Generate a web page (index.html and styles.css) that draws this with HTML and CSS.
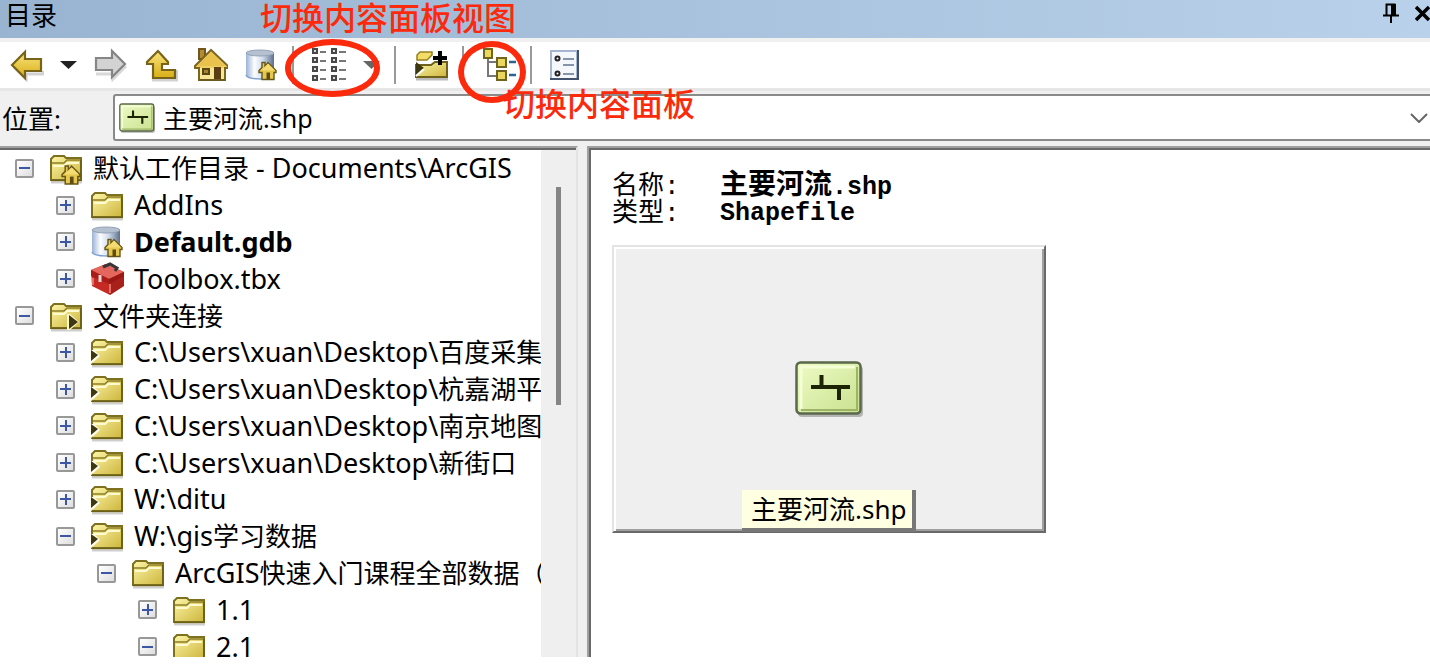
FILE: index.html
```html
<!DOCTYPE html>
<html lang="zh-CN">
<head>
    <meta charset="UTF-8">
    <meta name="viewport" content="width=device-width, initial-scale=1.0">
    <title>目录</title>
    <link rel="stylesheet" href="styles.css">
</head>
<body>

    <!-- Shared icons -->
    <svg class="icon-defs" aria-hidden="true">
        <defs>
            <linearGradient id="gold" x1="0" y1="0" x2="1" y2="1">
                <stop offset="0" stop-color="#fdf6a8"/>
                <stop offset="1" stop-color="#cdb53c"/>
            </linearGradient>
            <linearGradient id="arrowGold" x1="0" y1="0" x2="0" y2="1">
                <stop offset="0" stop-color="#f8e47c"/>
                <stop offset="1" stop-color="#d9ae16"/>
            </linearGradient>
            <linearGradient id="steel" x1="0" y1="0" x2="1" y2="0">
                <stop offset="0" stop-color="#9db2d6"/>
                <stop offset="0.3" stop-color="#fbfdff"/>
                <stop offset="0.6" stop-color="#cfdbea"/>
                <stop offset="1" stop-color="#5d6f8c"/>
            </linearGradient>
            <linearGradient id="green" x1="0" y1="0" x2="1" y2="1">
                <stop offset="0" stop-color="#eefbc4"/>
                <stop offset="1" stop-color="#c9e190"/>
            </linearGradient>
        </defs>
        <symbol id="house" viewBox="0 0 20 20">
            <path d="M4 2h3v4l3-4 8 8v2h-2v7H4v-7H1v-2l3-3z" fill="#e6c84e" stroke="#66561a" stroke-width="1.4"/>
            <path d="M10 3l-7 7h14z" fill="#f4dc72"/>
            <path d="M8.5 12h3.5v7H8.5z" fill="#5e4c14"/>
        </symbol>
        <symbol id="folder" viewBox="0 0 34 34">
            <path d="M2 31.5h31" stroke="#cfcfcf" stroke-width="2"/>
            <path d="M2 29V8l3-3h10l2 2h15v22z" fill="url(#gold)" stroke="#7d701f" stroke-width="2"/>
            <path d="M3 12h12l3-3h13" fill="none" stroke="#8d7f28" stroke-width="1.6"/>
            <path d="M4 15h11l3-3h12" fill="none" stroke="#fffbd0" stroke-width="2"/>
            <path d="M2 29.5h30V9" fill="none" stroke="#6c5f18" stroke-width="1.6"/>
        </symbol>
        <symbol id="folder-link" viewBox="0 0 34 34">
            <use href="#folder"/>
            <path d="M0 15h4l6 6-10 9z" fill="#fffdf0"/>
            <path d="M1 15l7 5-7 6z" fill="#3e3810"/>
        </symbol>
        <symbol id="folder-home" viewBox="0 0 34 34">
            <use href="#folder"/>
            <use href="#house" x="12" y="13" width="21" height="21"/>
        </symbol>
        <symbol id="folder-root" viewBox="0 0 34 34">
            <use href="#folder"/>
            <path d="M18 15h3l9 8-9 8h-3z" fill="#fff9d0"/>
            <path d="M20 16l9 7-9 7z" fill="#3e3810"/>
        </symbol>
        <symbol id="database" viewBox="0 0 34 34">
            <path d="M2 5v22c0 5 28 5 28 0V5z" fill="url(#steel)"/>
            <path d="M2 27c2 5 22 5 26 1" fill="none" stroke="#7da0d0" stroke-width="1.5"/>
            <ellipse cx="16" cy="5" rx="14" ry="3" fill="#b5c1d0" stroke="#93a1b5"/>
            <use href="#house" x="14" y="12" width="20" height="21"/>
        </symbol>
        <symbol id="toolbox" viewBox="0 0 34 34">
            <path d="M1 8L16 2l18 8v14L20 33 2 24z" fill="#c52a23"/>
            <path d="M1 8L16 2l18 8-15 7z" fill="#e4675e"/>
            <path d="M1 8l18 9v5L1 14zM34 10l-15 7v5l15-8z" fill="#a81d18"/>
            <path d="M19 17l15-7v14L20 33z" fill="#86130f" opacity="0.45"/>
            <path d="M13 5l7-3 7 4-2 3" fill="none" stroke="#363636" stroke-width="3"/>
            <path d="M10 13v7" stroke="#e9d8d6" stroke-width="3"/>
            <path d="M3 16v7M20 22v9" stroke="#f08a81" stroke-width="1.5"/>
        </symbol>
        <symbol id="shape-line" viewBox="0 0 68 56">
            <rect x="3" y="5" width="65" height="51" rx="4" fill="#b4b4b4"/>
            <rect x="1.5" y="1.5" width="64" height="51" rx="4" fill="url(#green)" stroke="#5a684b" stroke-width="2.5"/>
            <path d="M6 48V6h54" fill="none" stroke="#f4ffd6" stroke-width="3"/>
            <path d="M6 49h56V6" fill="none" stroke="#9db467" stroke-width="2"/>
            <path d="M16 26h39M26.500 14v12M44 26v13" fill="none" stroke="#1d2405" stroke-width="4"/>
        </symbol>
    </svg>

    <header class="title-bar">
        <h1>目录</h1>
        <div class="window-buttons">
            <button type="button" aria-label="自动隐藏">
                <svg width="16" height="20" viewBox="0 0 16 20"><path d="M3.500 12V1.500h8V12M0 12.500h16M8 13v7" fill="none" stroke="#000" stroke-width="2"/><path d="M8 1h5v11H8z"/></svg>
            </button>
            <button type="button" aria-label="关闭">
                <svg width="16" height="20" viewBox="0 0 16 20"><path d="M1 4l13 13M14 4L1 17" stroke="#000" stroke-width="3.500"/></svg>
            </button>
        </div>
    </header>

    <div class="toolbar" role="toolbar">
        <button type="button" aria-label="后退">
            <svg viewBox="0 0 34 34"><path d="M4 19l12 12v-5h17v-3" fill="none" stroke="#d2d2d2" stroke-width="3"/><path d="M2 17L15 4v7h16v12H15v7z" fill="url(#arrowGold)" stroke="#77631a" stroke-width="2.200"/></svg>
        </button>
        <button type="button" class="caret" aria-label="历史">
            <svg viewBox="0 0 18 34"><path d="M0 13h17l-8.500 8z" fill="#222"/></svg>
        </button>
        <button type="button" aria-label="前进">
            <svg viewBox="0 0 34 34"><path d="M32 18L19 31v-5H2" fill="none" stroke="#d8d8d8" stroke-width="3"/><path d="M31 16L18 3v7H2v12h16v7z" fill="#d3d3d3" stroke="#858585" stroke-width="2.200"/></svg>
        </button>
        <button type="button" aria-label="向上一级">
            <svg viewBox="0 0 34 34"><path d="M8 32h25V22" fill="none" stroke="#d2d2d2" stroke-width="3"/><path d="M14 3L3 14v2h6v14h22v-8H18v-6h6v-2z" fill="url(#arrowGold)" stroke="#77631a" stroke-width="2.200"/></svg>
        </button>
        <button type="button" aria-label="主目录">
            <svg viewBox="0 0 34 34"><path d="M5 1h6v10H5z" fill="#b38b35" stroke="#6f571e" stroke-width="2"/><path d="M17 2L1 18v2h4v12h26V20h3v-2z" fill="#efcf62" stroke="#7c651f" stroke-width="2"/><path d="M6 20h24v11H6z" fill="#f7e693"/><path d="M17 4L3 18h28z" fill="#e8c24d"/><path d="M9 21h6v5H9z" fill="#a98230" stroke="#5a4717" stroke-width="2"/><path d="M20 19h7v13h-7z" fill="#5c3c11"/><path d="M5 32h26" stroke="#6d5a1e" stroke-width="2"/></svg>
        </button>
        <button type="button" aria-label="默认地理数据库">
            <svg><use href="#database"/></svg>
        </button>
        <span class="separator"></span>
        <button type="button" aria-label="切换内容面板视图">
            <svg viewBox="0 0 34 34"><g fill="#ddd" stroke="#484848" stroke-width="2"><path d="M1 1h4v4H1zM1 10h4v4H1zM1 19h4v4H1zM1 28h4v4H1zM20 1h4v4h-4zM20 10h4v4h-4zM20 19h4v4h-4zM20 28h4v4h-4z"/><path d="M8 4h6M8 13h6M8 22h6M8 31h6M27 4h7M27 13h7M27 22h7M27 31h7" stroke="#777"/></g></svg>
        </button>
        <button type="button" class="caret" aria-label="视图">
            <svg viewBox="0 0 18 34"><path d="M1 13h17l-8.500 8z" fill="#666"/></svg>
        </button>
        <span class="separator"></span>
        <button type="button" aria-label="连接到文件夹">
            <svg viewBox="0 0 34 34"><path d="M2 31h32" stroke="#bbb" stroke-width="3"/><path d="M3 12V7l3-3h12v3l-5 5z" fill="#f2dd66" stroke="#968021" stroke-width="1.500"/><path d="M2 29V17h15l4-3h12v15z" fill="url(#gold)" stroke="#6f6119" stroke-width="2"/><path d="M2 14l8 6-8 7z" fill="#3e3810"/><path d="M2 28l8-7" stroke="#fff" stroke-width="2"/><path d="M19 10h14M26 3v14" stroke="#000" stroke-width="4"/></svg>
        </button>
        <span class="separator"></span>
        <button type="button" aria-label="切换内容面板">
            <svg viewBox="0 0 34 34"><path d="M6 10v18h10M6 14h10" fill="none" stroke="#777" stroke-width="2"/><g fill="#ead75e" stroke="#6f651e" stroke-width="2"><path d="M2 1h8v9H2zM15 10h9v9h-9zM15 23h9v9h-9z"/></g><path d="M27 14h7M27 27h7" stroke="#2b6590" stroke-width="2.500"/></svg>
        </button>
        <span class="separator"></span>
        <button type="button" aria-label="选项">
            <svg viewBox="0 0 34 34"><path d="M1 3h26v28H1z" fill="#f4f7fc" stroke="#a5b6d2" stroke-width="2"/><path d="M0 31h28V2" fill="none" stroke="#42526f" stroke-width="2"/><path d="M13 11h11M13 17h11M13 26h11" stroke="#8494ab" stroke-width="2"/><g fill="#fff" stroke="#222" stroke-width="2"><circle cx="7.500" cy="10.500" r="2"/><circle cx="7.500" cy="25.500" r="2"/></g></svg>
        </button>
    </div>

    <div class="location-bar">
        <label for="location">位置:</label>
        <div class="location-box">
            <svg class="location-icon"><use href="#shape-line"/></svg>
            <select id="location">
                <option>主要河流.shp</option>
            </select>
            <svg class="chevron" viewBox="0 0 18 10"><path d="M1 1l8 8 8-8" fill="none" stroke="#666" stroke-width="2"/></svg>
        </div>
    </div>

    <main class="panes">
        <!-- Catalog tree -->
        <nav class="tree-pane">
            <ul class="tree">
                <li><button type="button" class="toggle open" aria-label="折叠"></button><svg><use href="#folder-home"/></svg><span><b>默认工作目录</b> - Documents\ArcGIS</span></li>
                <li class="level-1"><button type="button" class="toggle" aria-label="展开"></button><svg><use href="#folder"/></svg><span>AddIns</span></li>
                <li class="level-1"><button type="button" class="toggle" aria-label="展开"></button><svg><use href="#database"/></svg><span class="default-db">Default.gdb</span></li>
                <li class="level-1"><button type="button" class="toggle" aria-label="展开"></button><svg><use href="#toolbox"/></svg><span>Toolbox.tbx</span></li>
                <li><button type="button" class="toggle open" aria-label="折叠"></button><svg><use href="#folder-root"/></svg><span><b>文件夹连接</b></span></li>
                <li class="level-1"><button type="button" class="toggle" aria-label="展开"></button><svg><use href="#folder-link"/></svg><span>C:\Users\xuan\Desktop\<b>百度采集</b></span></li>
                <li class="level-1"><button type="button" class="toggle" aria-label="展开"></button><svg><use href="#folder-link"/></svg><span>C:\Users\xuan\Desktop\<b>杭嘉湖平</b></span></li>
                <li class="level-1"><button type="button" class="toggle" aria-label="展开"></button><svg><use href="#folder-link"/></svg><span>C:\Users\xuan\Desktop\<b>南京地图</b></span></li>
                <li class="level-1"><button type="button" class="toggle" aria-label="展开"></button><svg><use href="#folder-link"/></svg><span>C:\Users\xuan\Desktop\<b>新街口</b></span></li>
                <li class="level-1"><button type="button" class="toggle" aria-label="展开"></button><svg><use href="#folder-link"/></svg><span>W:\ditu</span></li>
                <li class="level-1"><button type="button" class="toggle open" aria-label="折叠"></button><svg><use href="#folder-link"/></svg><span>W:\gis<b>学习数据</b></span></li>
                <li class="level-2"><button type="button" class="toggle open" aria-label="折叠"></button><svg><use href="#folder"/></svg><span>ArcGIS<b>快速入门课程全部数据（</b></span></li>
                <li class="level-3"><button type="button" class="toggle" aria-label="展开"></button><svg><use href="#folder"/></svg><span>1.1</span></li>
                <li class="level-3"><button type="button" class="toggle open" aria-label="折叠"></button><svg><use href="#folder"/></svg><span>2.1</span></li>
            </ul>
            <div class="scrollbar"><div class="thumb"></div></div>
        </nav>

        <!-- Contents of the selected item -->
        <section class="content-pane">
            <dl class="properties">
                <dt>名称:</dt>
                <dd><b>主要河流</b>.shp</dd>
                <dt>类型:</dt>
                <dd>Shapefile</dd>
            </dl>
            <div class="preview">
                <svg class="preview-icon"><use href="#shape-line"/></svg>
                <div class="preview-name">主要河流.shp</div>
            </div>
        </section>
    </main>

    <!-- Callouts over the toolbar -->
    <div class="ring ring-view"></div>
    <div class="ring ring-panel"></div>
    <div class="callout callout-view">切换内容面板视图</div>
    <div class="callout callout-panel">切换内容面板</div>

</body>
</html>
```

FILE: styles.css
```css
* {
    box-sizing: border-box;
}

body {
    position: relative;
    display: flex;
    flex-direction: column;
    height: 100vh;
    margin: 0;
    padding-bottom: 13px;
    overflow: hidden;
    background: #fff;
    color: #000;
    font-family: "Noto Sans", "Noto Sans CJK SC", sans-serif;
    font-size: 26px;
}

button {
    padding: 0;
    border: none;
    background: none;
}

svg {
    display: block;
    flex: none;
}

b {
    font-size: 26px;
    font-weight: inherit;
}

.icon-defs {
    position: absolute;
    width: 0;
    height: 0;
}

/* Title bar */
.title-bar {
    display: flex;
    flex: none;
    justify-content: space-between;
    height: 38px;
    padding-left: 5px;
    background: linear-gradient(to right, #99b4d1, #b9d1ea);
}

.title-bar h1 {
    margin: 0;
    font-size: 26px;
    font-weight: normal;
    line-height: 30px;
}

.window-buttons {
    display: flex;
    align-items: flex-start;
    gap: 16px;
    padding-top: 3px;
    margin-right: -1px;
}

/* Toolbar */
.toolbar {
    display: flex;
    flex: none;
    align-items: center;
    gap: 16px;
    height: 53px;
    padding-left: 10px;
    border-top: 4px solid #f0f0f0;
    border-bottom: 3px solid #e6e6e6;
}

.toolbar button,
.toolbar svg {
    width: 34px;
    height: 34px;
}

.toolbar .caret,
.toolbar .caret svg {
    width: 18px;
}

.separator {
    width: 2px;
    height: 38px;
    margin: 0 2px 0 -2px;
    background: #999;
}

/* Location */
.location-bar {
    display: flex;
    flex: none;
    align-items: center;
    height: 55px;
    padding-bottom: 2px;
    background: #f0f0f0;
}

.location-bar label {
    width: 113px;
    padding-left: 2px;
}

.location-box {
    display: flex;
    flex: 1;
    align-items: center;
    height: 47px;
    padding: 0 2px 0 4px;
    border: 2px solid #8a8a8a;
    border-right: none;
    border-radius: 3px 0 0 3px;
    background: #fff;
}

.location-icon {
    width: 36px;
    height: 30px;
}

.location-box select {
    flex: 1;
    height: 40px;
    padding: 0 0 0 8px;
    border: none;
    background: none;
    color: #000;
    font-family: inherit;
    font-size: 25px;
    appearance: none;
}

.chevron {
    width: 18px;
    height: 10px;
}

/* Panes */
.panes {
    display: flex;
    flex: 1;
    gap: 9px;
    min-height: 0;
    background: #f0f0f0;
}

.tree-pane {
    display: flex;
    width: 578px;
    padding-top: 2px;
    border-top: 2px solid #a0a0a0;
    border-right: 2px solid #e3e3e3;
    overflow: hidden;
    background: #fff;
    box-shadow: inset 0 2px #696969;
}

.tree {
    display: grid;
    flex: 1;
    grid-auto-rows: 1fr;
    height: 515px;
    min-width: 0;
    margin: 0;
    padding: 0;
    overflow: hidden;
    font-size: 27px;
    list-style: none;
}

.tree li {
    display: flex;
    align-items: center;
    padding-left: 15px;
    white-space: nowrap;
}

.tree .level-1 {
    padding-left: 56px;
}

.tree .level-2 {
    padding-left: 97px;
}

.tree .level-3 {
    padding-left: 138px;
}

.tree svg {
    width: 34px;
    height: 34px;
    margin: 0 10px 0 15px;
}

.tree span {
    line-height: 36px;
}

.default-db {
    font-weight: bold;
}

.toggle {
    flex: none;
    width: 19px;
    height: 19px;
    border: 2px solid #989898;
    border-radius: 2px;
    background:
        linear-gradient(#3d57a5, #3d57a5) center / 11px 2px no-repeat,
        linear-gradient(#3d57a5, #3d57a5) center / 2px 11px no-repeat,
        linear-gradient(135deg, #fff, #dedede);
}

.toggle.open {
    background:
        linear-gradient(#3d57a5, #3d57a5) center / 11px 2px no-repeat,
        linear-gradient(135deg, #fff, #dedede);
}

.scrollbar {
    width: 35px;
    padding: 37px 15px 0;
    background: #efefef;
}

.thumb {
    height: 218px;
    background: #858585;
}

.content-pane {
    flex: 1;
    padding: 26px 23px;
    border-top: 2px solid #a0a0a0;
    border-left: 2px solid #a0a0a0;
    background: #fff;
    box-shadow: inset 2px 2px #696969;
}

.properties {
    display: grid;
    grid-template-columns: 108px 1fr;
    margin: 0;
    font-family: "Liberation Mono", "Noto Sans CJK SC", monospace;
    line-height: 26px;
}

.properties dd {
    margin: 0;
    font-size: 25px;
    font-weight: bold;
}

.properties b {
    font-size: 28px;
}

/* Preview */
.preview {
    position: relative;
    display: flex;
    align-items: center;
    justify-content: center;
    width: 434px;
    height: 288px;
    margin-top: 18px;
    border: 2px solid;
    border-color: #e3e3e3 #696969 #696969 #e3e3e3;
    background: #efefef;
    box-shadow: inset 2px 2px #fff, inset -2px -2px #a0a0a0;
}

.preview-icon {
    width: 68px;
    height: 56px;
}

.preview-name {
    position: absolute;
    bottom: -1px;
    left: 50%;
    width: 174px;
    margin-left: -87px;
    padding-left: 9px;
    border-right: 4px solid #777;
    border-bottom: 4px solid #777;
    background: #ffffe1;
    line-height: 38px;
    white-space: nowrap;
}

/* Callouts */
.ring {
    position: absolute;
    border: 6px solid #fb2a0c;
    border-radius: 50%;
}

.ring-view {
    top: 39px;
    left: 285px;
    width: 95px;
    height: 58px;
}

.ring-panel {
    top: 41px;
    left: 458px;
    width: 68px;
    height: 62px;
}

.callout {
    position: absolute;
    color: #fb2a0c;
    font-size: 32px;
    font-weight: 500;
    line-height: 36px;
    white-space: nowrap;
}

.callout-view {
    top: 0;
    left: 260px;
}

.callout-panel {
    top: 86px;
    left: 503px;
}
```
